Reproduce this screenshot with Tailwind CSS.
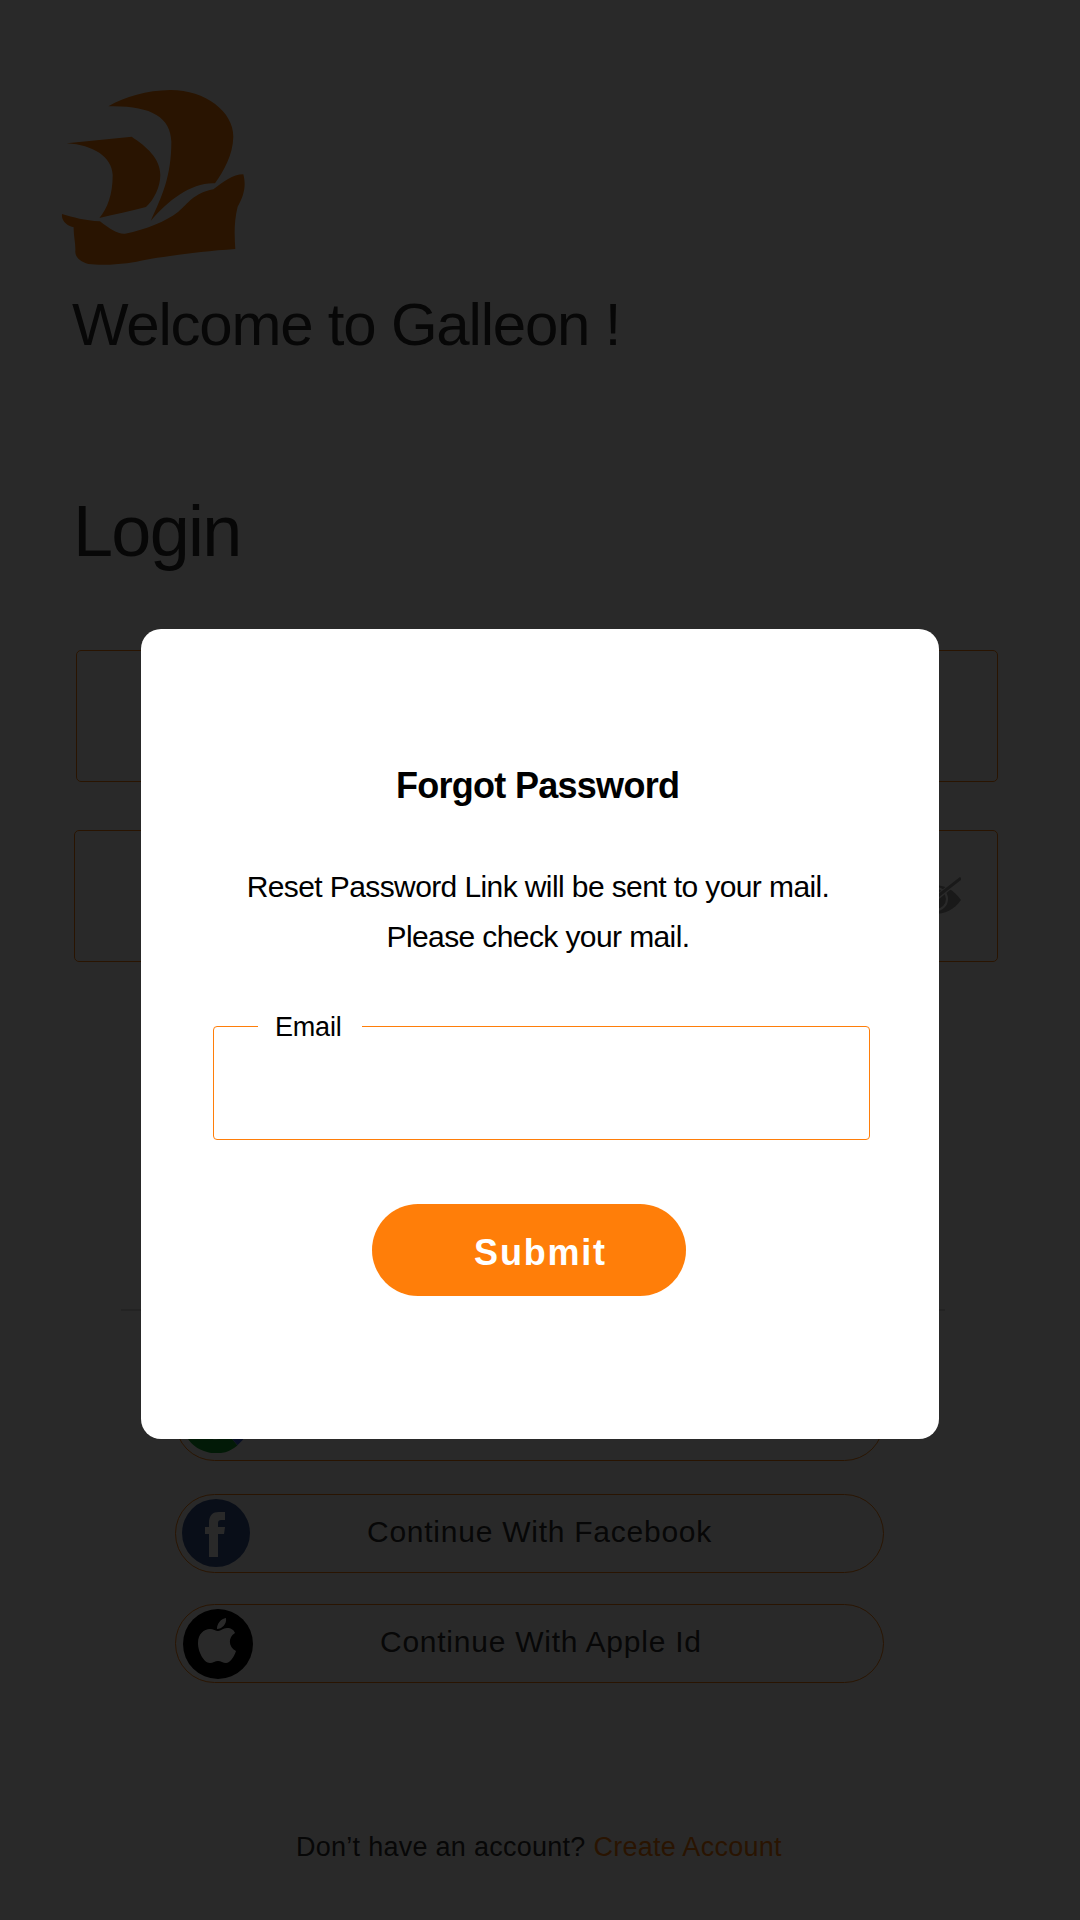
<!DOCTYPE html>
<html lang="en">
<head>
<meta charset="utf-8">
<title>Galleon – Forgot Password</title>
<script src="https://cdn.jsdelivr.net/npm/@tailwindcss/browser@4"></script>
</head>
<body class="relative w-[1080px] h-[1920px] overflow-hidden bg-white font-['Liberation_Sans',Arial,sans-serif] text-[#303030]">

<main class="flex flex-col h-[1920px] pl-[60px] pt-[88px]">
  <svg class="w-[190px] h-[180px] shrink-0" viewBox="30 24 570 540" fill="#ff7e09">
    <path d="M175 79C225 50 290 31 360 30C465 29 551 95 550 170C549 225 520 275 495 310C425 307 355 360 302 423C335 350 364 290 364 185C362 110 300 76 175 79Z"/>
    <path d="M50 190L245 170C290 200 331 235 331 285C331 320 312 360 288 381C240 395 195 402 148 414C172 385 188 345 188 285C185 230 130 195 50 190Z"/>
    <path d="M36 402C70 412 105 422 150 424C180 448 205 463 225 461C290 447 345 425 385 395C415 370 430 340 490 328C520 306 548 283 580 283C590 320 580 350 563 380C552 425 553 465 556 507C440 515 320 532 260 545C200 555 150 556 115 552C90 545 74 530 76 512C77 490 70 465 71 442C55 438 33 425 36 402Z"/>
  </svg>
  <h1 class="mt-[23px] pl-[12px] text-[60px] leading-[68px] tracking-[-1.22px]">Welcome to Galleon !</h1>
  <h2 class="mt-[130px] pl-[13px] text-[72px] leading-[84px] tracking-[-1.7px]">Login</h2>
  <div class="mt-[77px] ml-[16px] w-[922px] h-[132px] shrink-0 rounded-[5px] border border-[#ff7e09]"></div>
  <div class="mt-[48px] ml-[14px] w-[924px] h-[132px] shrink-0 rounded-[5px] border border-[#ff7e09] flex items-center justify-end pr-[36px]">
    <svg class="w-[54px] h-[38px]" viewBox="0 0 54 38">
      <path d="M0 23C8 12 17 8 27 8C38 8 47 13 54 23C47 33 38 37 27 37C17 37 8 33 0 23Z" fill="#9c9c9c"/>
      <circle cx="29" cy="22" r="11" fill="none" stroke="#fff" stroke-width="2"/>
      <path d="M10 37L51 3" stroke="#fff" stroke-width="5"/>
      <path d="M8 37L54 1" stroke="#9c9c9c" stroke-width="3"/>
    </svg>
  </div>
  <hr class="mt-[347px] ml-[61px] w-[824px] shrink-0 border-t-2 border-[#d8d8d8]">

  <div class="mt-[71px] ml-[115px] w-[709px] h-[79px] shrink-0 rounded-full border border-[#ff7e09] flex items-center pl-[7px]">
    <svg class="w-[68px] h-[68px] -mt-[5px]" viewBox="0 0 68 68" fill="none" stroke-width="14">
      <path d="M8 45A27 27 0 0 0 50 55" stroke="#12a02c"/>
      <path d="M50 55A28 28 0 0 0 60 34H34" stroke="#3b63d8"/>
    </svg>
  </div>
  <div class="mt-[33px] ml-[115px] w-[709px] h-[79px] shrink-0 rounded-full border border-[#ff7e09] flex items-center pl-[6px]">
    <svg class="w-[68px] h-[68px] -mt-[2px]" viewBox="0 0 68 68">
      <circle cx="34" cy="34" r="34" fill="#3b5998"/>
      <path d="M27 58V35H23V28H27V24C27 16 31 13 37 13H43V21H39C37 21 36 22 36 24V28H43L42 35H36V58Z" fill="#fff"/>
    </svg>
    <span class="pl-[117px] -mt-[5px] text-[30px] tracking-[0.75px]">Continue With Facebook</span>
  </div>
  <div class="mt-[31px] ml-[115px] w-[709px] h-[79px] shrink-0 rounded-full border border-[#ff7e09] flex items-center pl-[7px]">
    <svg class="w-[70px] h-[70px] mt-[1px]" viewBox="0 0 70 70">
      <circle cx="35" cy="35" r="35" fill="#000"/>
      <path d="M34 20C34 14 38 10 43 9C44 15 39 20 34 20ZM35 22C38 22 40 19 44 19C48 19 51 21 52 24C45 28 45 38 53 42C51 48 47 54 43 54C40 54 38 52 35 52C32 52 30 54 27 54C21 54 15 43 15 34C15 25 21 20 27 20C30 20 33 22 35 22Z" fill="#fff"/>
    </svg>
    <span class="pl-[127px] -mt-[5px] text-[30px] tracking-[0.75px]">Continue With Apple Id</span>
  </div>
  <p class="mt-[148px] pl-[236px] text-[27px] leading-[32px] tracking-[0.27px] whitespace-nowrap">Don’t have an account? <a class="text-[#ff7e09]">Create Account</a></p>
</main>

<div class="absolute inset-0 bg-black/84 flex flex-col items-center pt-[629px]">
  <section class="w-[798px] h-[810px] rounded-[20px] bg-white text-black flex flex-col pt-[137px]">
    <h3 class="pl-[255px] text-[36px] leading-[40px] font-bold tracking-[-0.72px]">Forgot Password</h3>
    <p class="mt-[56px] pr-[4px] text-center text-[30px] leading-[50px] tracking-[-0.6px]">Reset Password Link will be sent to your mail.<br>Please check your mail.</p>
    <fieldset class="mt-[49px] ml-[72px] w-[657px] h-[129px] shrink-0 rounded-[4px] border border-[#ff7e09] pl-[44px]">
      <legend class="w-[104px] pl-[17px] pt-[2px] text-[27px] leading-[28px] tracking-[-0.2px]">Email</legend>
    </fieldset>
    <button class="mt-[64px] ml-[231px] w-[314px] h-[92px] shrink-0 rounded-full bg-[#ff7e09] pl-[23px] pt-[5px] text-white text-[36px] font-bold tracking-[1.8px]">Submit</button>
  </section>
</div>
</body>
</html>
